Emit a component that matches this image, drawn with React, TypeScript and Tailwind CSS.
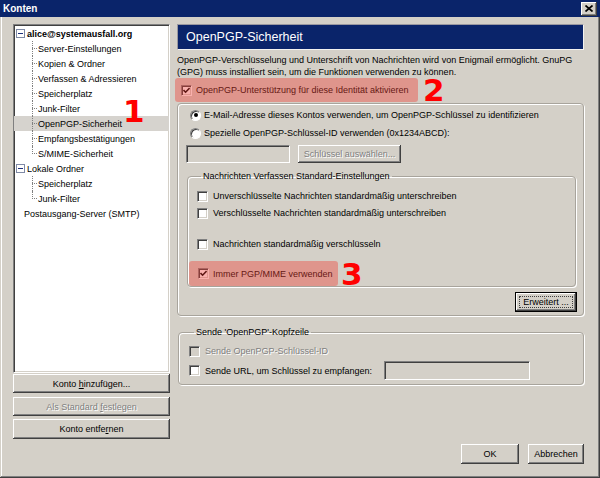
import React from "react"

const raised =
  "flex items-center justify-center bg-[#d4d0c8] shadow-[inset_-1px_-1px_0_#404040,inset_1px_1px_0_#ffffff,inset_-2px_-2px_0_#808080]"
const sunken =
  "border border-t-[#808080] border-l-[#808080] border-b-white border-r-white shadow-[inset_1px_1px_0_#404040,inset_-1px_-1px_0_#d4d0c8]"
const disabledText = "text-[#808080] [text-shadow:1px_1px_0_#ffffff]"

function Check({ checked = false, disabled = false }: { checked?: boolean; disabled?: boolean }) {
  return (
    <span
      className={`shrink-0 w-[11px] h-[11px] flex items-center justify-center ${sunken} ${
        disabled ? "bg-[#d4d0c8]" : "bg-white"
      }`}
    >
      {checked && (
        <svg width="7" height="7" viewBox="0 0 7 7">
          <path d="M0.5 3 L2.6 5.2 L6.6 1" stroke="#000" strokeWidth="1.6" fill="none" />
        </svg>
      )}
    </span>
  )
}

function Radio({ checked = false }: { checked?: boolean }) {
  return (
    <span className="shrink-0 w-[11px] h-[11px] rounded-full flex items-center justify-center bg-white border border-t-[#808080] border-l-[#808080] border-b-white border-r-white shadow-[inset_1px_1px_0_#404040]">
      {checked && <span className="w-[4px] h-[4px] rounded-full bg-black" />}
    </span>
  )
}

// red translucent marker, drawn over the row it highlights
function Marker() {
  return <span className="absolute inset-0 rounded-[3px] bg-[rgba(240,60,50,0.4)] pointer-events-none" />
}

function Num({ n, className = "" }: { n: string; className?: string }) {
  return (
    <span className={`font-['DejaVu_Sans',sans-serif] font-bold text-[31px] leading-[22px] text-[#ff0000] ${className}`}>
      {n}
    </span>
  )
}

type Row = { label: string; kind: "root" | "child" | "plain"; last?: boolean; selected?: boolean; bold?: boolean }

const rows: Row[] = [
  { label: "alice@systemausfall.org", kind: "root", bold: true },
  { label: "Server-Einstellungen", kind: "child" },
  { label: "Kopien & Ordner", kind: "child" },
  { label: "Verfassen & Adressieren", kind: "child" },
  { label: "Speicherplatz", kind: "child" },
  { label: "Junk-Filter", kind: "child" },
  { label: "OpenPGP-Sicherheit", kind: "child", selected: true },
  { label: "Empfangsbestätigungen", kind: "child" },
  { label: "S/MIME-Sicherheit", kind: "child", last: true },
  { label: "Lokale Ordner", kind: "root" },
  { label: "Speicherplatz", kind: "child" },
  { label: "Junk-Filter", kind: "child", last: true },
  { label: "Postausgang-Server (SMTP)", kind: "plain" },
]

function TreeRow({ row }: { row: Row }) {
  return (
    <div className={`flex h-[15px] items-center ${row.selected ? "bg-[#d6d3ce]" : ""}`}>
      {row.kind === "root" && (
        <span className="ml-[2px] mr-[2px] w-[9px] h-[9px] shrink-0 border border-[#7f8aa6] bg-white flex items-center justify-center">
          <span className="w-[5px] h-[1px] bg-[#1c2f7c]" />
        </span>
      )}
      {row.kind === "plain" && <span className="w-[10px] shrink-0" />}
      {row.kind === "child" && (
        <div className="relative w-[24px] h-full shrink-0">
          <span
            className={`absolute left-[18px] top-0 ${row.last ? "h-[8px]" : "h-full"} border-l border-dotted border-[#808080]`}
          />
          <span className="absolute left-[18px] top-[7px] w-[5px] border-t border-dotted border-[#808080]" />
        </div>
      )}
      <span className={row.bold ? "font-bold" : ""}>{row.label}</span>
    </div>
  )
}

export default function App() {
  return (
    <div className="relative w-[600px] h-[478px] overflow-hidden bg-[#d4d0c8] font-['Liberation_Sans',Arial,sans-serif] text-[9px] leading-[12px] text-black flex flex-col shadow-[inset_-1px_-1px_0_#404040,inset_1px_1px_0_#d4d0c8,inset_-2px_-2px_0_#808080,inset_2px_2px_0_#ffffff]">
      {/* Title bar */}
      <div className="h-[17px] shrink-0 bg-[#0a246a] flex items-center justify-between pl-[3px] pr-[3px]">
        <span className="text-white font-bold text-[10px]">Konten</span>
        <div className={`w-[16px] h-[14px] ${raised}`}>
          <svg width="8" height="7" viewBox="0 0 8 7">
            <path d="M0.5 0.5 L7.5 6.5 M7.5 0.5 L0.5 6.5" stroke="#000" strokeWidth="1.7" fill="none" />
          </svg>
        </div>
      </div>

      <div className="flex pt-[7px] pl-[13px]">
        {/* Left column */}
        <div className="w-[157px] flex flex-col">
          <div className={`h-[349px] bg-white pt-[1px] ${sunken}`}>
            {rows.map((row, i) => (
              <TreeRow key={i} row={row} />
            ))}
          </div>
          <div className={`mt-[1px] h-[19px] ${raised}`}>
            <span>
              Konto <u>h</u>inzufügen...
            </span>
          </div>
          <div className={`mt-[4px] h-[19px] ${raised} ${disabledText}`}>
            <span>
              Als Standard <u>f</u>estlegen
            </span>
          </div>
          <div className={`mt-[3px] h-[20px] ${raised}`}>
            <span>
              Konto entfe<u>r</u>nen
            </span>
          </div>
        </div>

        {/* Right column */}
        <div className="ml-[7px] w-[407px] flex flex-col">
          <div className="h-[26px] bg-[#0a246a] border border-t-[#9a98a0] border-l-[#9a98a0] border-b-[#f4f3f0] border-r-[#f4f3f0] flex items-center pl-[8px]">
            <span className="text-white text-[12.5px]">OpenPGP-Sicherheit</span>
          </div>

          <p className="mt-[4px]">
            OpenPGP-Verschlüsselung und Unterschrift von Nachrichten wird von Enigmail ermöglicht. GnuPG
            <br />
            (GPG) muss installiert sein, um die Funktionen verwenden zu können.
          </p>

          <div className="flex items-center h-[24px]">
            <div className="relative -ml-[2px] w-[243px] h-[24px] flex items-center gap-[4px] pl-[6px]">
              <Check checked />
              <span>OpenPGP-Unterstützung für diese Identität aktivieren</span>
              <Marker />
            </div>
            <Num n="2" className="ml-[5px]" />
          </div>

          {/* Identity key group */}
          <div className="mt-[1px] border border-[#a8a49c] rounded-[4px] shadow-[1px_1px_0_#ffffff,inset_1px_1px_0_#ffffff] pt-[4px] pb-[3px] pl-[8px] pr-[7px] flex flex-col">
            <div className="ml-[4px] h-[14px] flex items-center gap-[3px]">
              <Radio checked />
              <span>E-Mail-Adresse dieses Kontos verwenden, um OpenPGP-Schlüssel zu identifizieren</span>
            </div>
            <div className="ml-[4px] mt-[4px] h-[14px] flex items-center gap-[3px]">
              <Radio />
              <span>Spezielle OpenPGP-Schlüssel-ID verwenden (0x1234ABCD):</span>
            </div>
            <div className="mt-[5px] flex gap-[8px] h-[18px]">
              <div className={`w-[104px] h-full bg-[#d4d0c8] ${sunken}`} />
              <div className={`w-[103px] h-full ${raised} ${disabledText}`}>Schlüssel auswählen...</div>
            </div>

            <fieldset className="mt-[7px] ml-[1px] border border-[#a8a49c] rounded-[4px] shadow-[1px_1px_0_#ffffff,inset_1px_1px_0_#ffffff] pl-[9px] flex flex-col">
              <legend className="ml-[4px] px-[2px]">Nachrichten Verfassen Standard-Einstellungen</legend>
              <div className="mt-[7px] h-[14px] flex items-center gap-[5px]">
                <Check />
                <span>Unverschlüsselte Nachrichten standardmäßig unterschreiben</span>
              </div>
              <div className="mt-[3px] h-[14px] flex items-center gap-[5px]">
                <Check />
                <span>Verschlüsselte Nachrichten standardmäßig unterschreiben</span>
              </div>
              <div className="mt-[17px] h-[14px] flex items-center gap-[5px]">
                <Check />
                <span>Nachrichten standardmäßig verschlüsseln</span>
              </div>
              <div className="mt-[10px] -ml-[8px] h-[25px] flex items-center">
                <div className="relative w-[149px] h-full flex items-center gap-[4px] pl-[9px]">
                  <Check checked />
                  <span>Immer PGP/MIME verwenden</span>
                  <Marker />
                </div>
                <Num n="3" className="ml-[3px]" />
              </div>
            </fieldset>

            <div className="mt-[5px] flex justify-end -mr-[1px]">
              <div className="w-[62px] h-[20px] border border-black flex">
                <div className={`relative flex-1 ${raised}`}>
                  <span className="whitespace-nowrap">Erweitert ...</span>
                  {/* focus rectangle */}
                  <span className="absolute inset-[3px] border border-dotted border-[#404040] pointer-events-none" />
                </div>
              </div>
            </div>
          </div>

          {/* Header group */}
          <fieldset className="mt-[10px] ml-[1px] border border-[#a8a49c] rounded-[4px] shadow-[1px_1px_0_#ffffff,inset_1px_1px_0_#ffffff] pl-[10px] pb-[4px] flex flex-col">
            <legend className="ml-[5px] px-[2px]">Sende 'OpenPGP'-Kopfzeile</legend>
            <div className="mt-[6px] h-[14px] flex items-center gap-[5px]">
              <Check disabled />
              <span className={disabledText}>Sende OpenPGP-Schlüssel-ID</span>
            </div>
            <div className="mt-[3px] h-[19px] flex items-center gap-[5px]">
              <Check />
              <span>Sende URL, um Schlüssel zu empfangen:</span>
              <div className={`ml-[7px] w-[146px] h-[19px] bg-[#d4d0c8] ${sunken}`} />
            </div>
          </fieldset>

          <div className="mt-[59px] flex justify-end gap-[9px]">
            <div className={`w-[58px] h-[20px] ${raised}`}>OK</div>
            <div className={`w-[56px] h-[20px] ${raised}`}>Abbrechen</div>
          </div>
        </div>
      </div>

      <Num n="1" className="absolute left-[123px] top-[100px]" />
    </div>
  )
}
